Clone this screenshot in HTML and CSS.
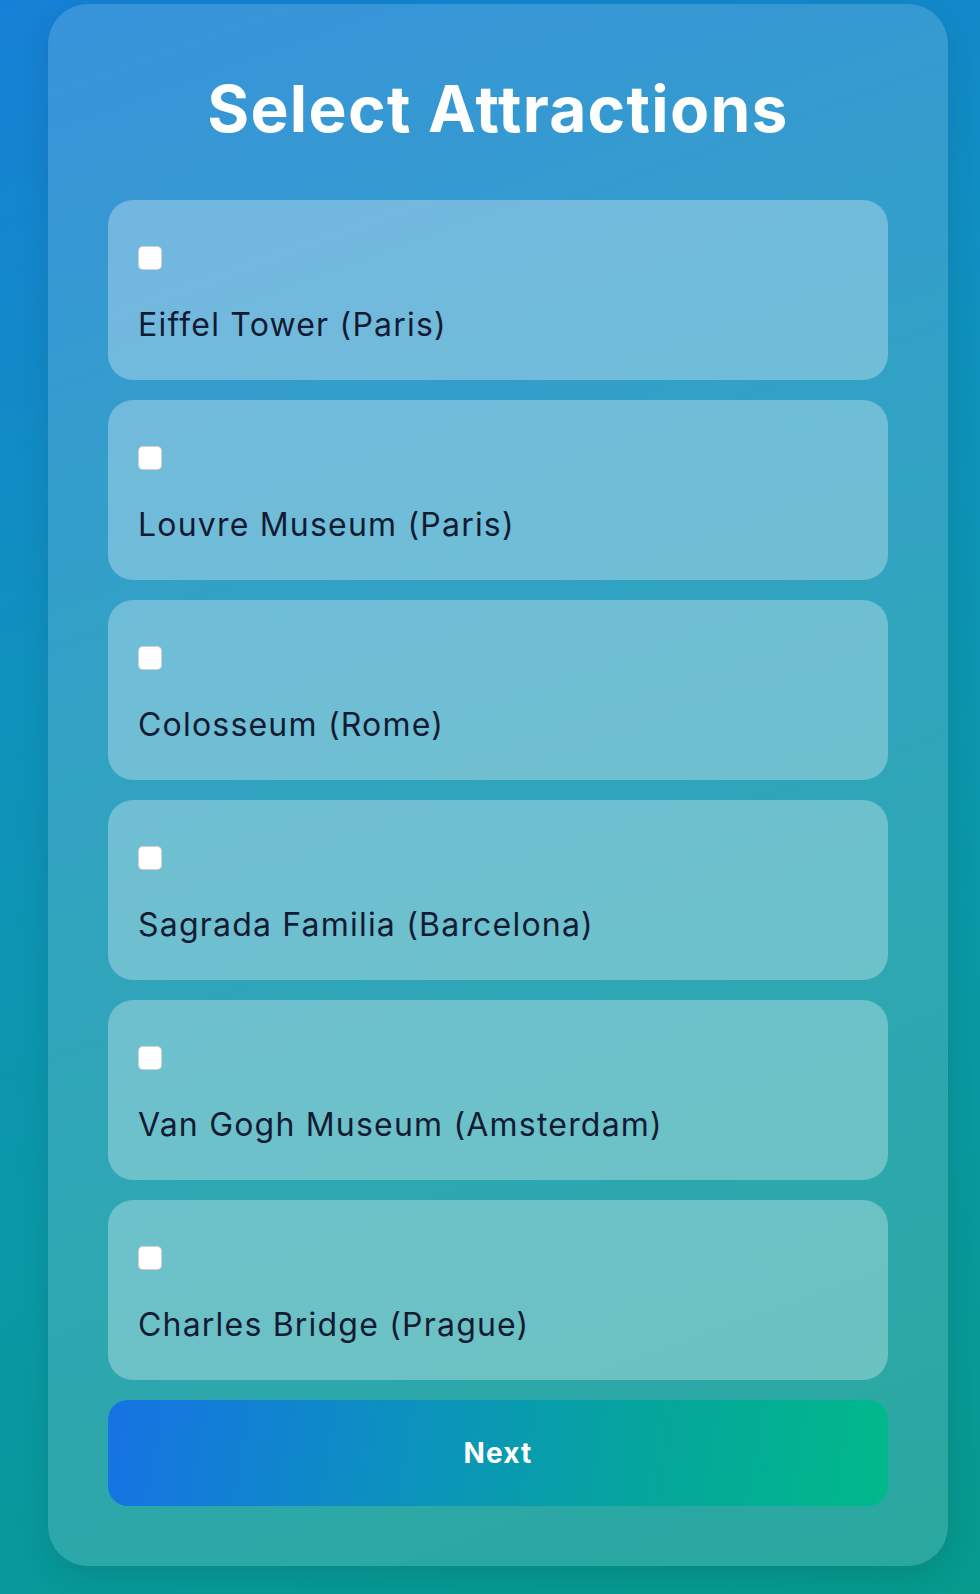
FILE: index.html
```html
<!DOCTYPE html>
<html lang="en">
<head>
<meta charset="utf-8">
<title>Select Attractions</title>
<link rel="stylesheet" href="styles.css">
</head>
<body>
<main class="page">
  <section class="card">
    <h1 class="title">Select Attractions</h1>
    <form class="list">
      <label class="item"><input type="checkbox" class="check"><span class="name">Eiffel Tower (Paris)</span></label>
      <label class="item"><input type="checkbox" class="check"><span class="name">Louvre Museum (Paris)</span></label>
      <label class="item"><input type="checkbox" class="check"><span class="name">Colosseum (Rome)</span></label>
      <label class="item"><input type="checkbox" class="check"><span class="name">Sagrada Familia (Barcelona)</span></label>
      <label class="item"><input type="checkbox" class="check"><span class="name">Van Gogh Museum (Amsterdam)</span></label>
      <label class="item"><input type="checkbox" class="check"><span class="name">Charles Bridge (Prague)</span></label>
      <button type="button" class="next">Next</button>
    </form>
  </section>
</main>
</body>
</html>
```
FILE: styles.css
```css
html, body {
  margin: 0;
  padding: 0;
}
body {
  min-height: 100vh;
  background: linear-gradient(160deg, #1680d6 0%, #0f91bd 35%, #0a98a6 65%, #06998c 100%);
  font-family: Inter, "Noto Sans", sans-serif;
}
.page {
  padding: 4px 32px 0 48px;
  display: flex;
}
.card {
  box-sizing: border-box;
  width: 900px;
  padding: 67px 60px 60px;
  border-radius: 40px;
  background: rgba(255, 255, 255, 0.15);
  box-shadow: 0 10px 30px rgba(0, 0, 0, 0.1);
}
.title {
  margin: 0 0 52px;
  font-size: 64px;
  line-height: 1.2;
  font-weight: 700;
  letter-spacing: 1.3px;
  color: #ffffff;
  text-align: center;
}
.list {
  display: flex;
  flex-direction: column;
  gap: 20px;
}
.item {
  display: flex;
  flex-direction: column;
  align-items: flex-start;
  gap: 31px;
  padding: 46px 30px 31px;
  border-radius: 25px;
  background: rgba(255, 255, 255, 0.3);
}
.check {
  appearance: none;
  -webkit-appearance: none;
  margin: 0;
  width: 24px;
  height: 24px;
  box-sizing: border-box;
  border: 1px solid rgba(0, 0, 0, 0.18);
  border-radius: 5px;
  background: #ffffff;
}
.name {
  font-size: 32px;
  line-height: 48px;
  letter-spacing: 1.2px;
  color: #131b33;
}
.next {
  border: 0;
  padding: 32px 0;
  border-radius: 20px;
  background: linear-gradient(100deg, #1672e4 0%, #0b93bd 40%, #05a69b 70%, #00b98a 100%);
  color: #ffffff;
  font-family: Inter, "Noto Sans", sans-serif;
  font-size: 28px;
  line-height: 42px;
  font-weight: 700;
  letter-spacing: 1.2px;
}
```
